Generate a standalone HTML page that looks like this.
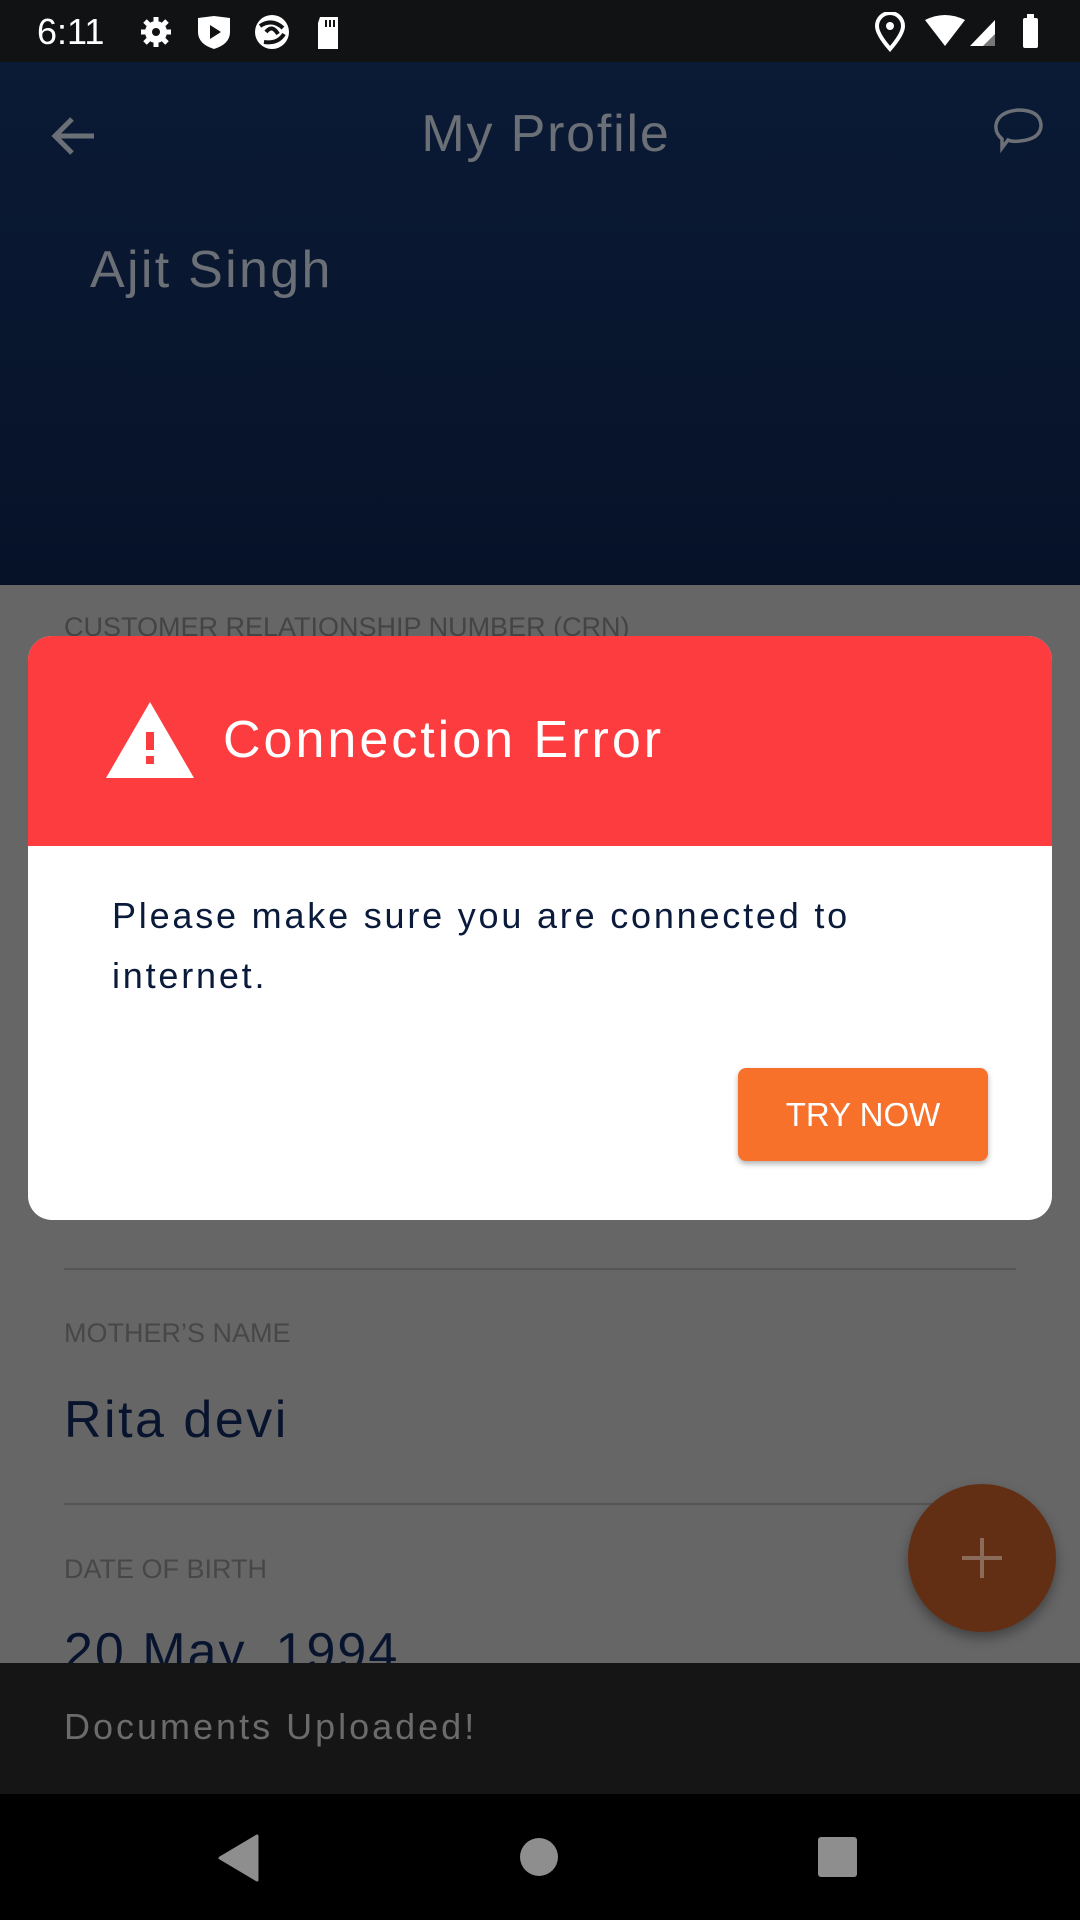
<!DOCTYPE html>
<html><head><meta charset="utf-8"><style>
*{margin:0;padding:0;box-sizing:border-box}
body{width:1080px;height:1920px;position:relative;overflow:hidden;background:#666;font-family:"Liberation Sans",sans-serif}
.a{position:absolute;white-space:nowrap}
</style></head><body>
<div class="a" style="left:0;top:0;width:1080px;height:62px;background:#111214"></div>
<div class="a" style="left:37px;top:11px;font-size:36px;color:#fff">6:11</div>
<svg class="a" style="left:138px;top:14px" width="210" height="36" viewBox="0 0 210 36">
<circle cx="18" cy="18" r="11" fill="#fff"/><circle cx="18" cy="18" r="4" fill="#111214"/>
<g stroke="#fff" stroke-width="5"><line x1="18" y1="3" x2="18" y2="33"/><line x1="3" y1="18" x2="33" y2="18"/><line x1="7" y1="7" x2="29" y2="29"/><line x1="29" y1="7" x2="7" y2="29"/></g>
<circle cx="18" cy="18" r="4" fill="#111214"/>
<path d="M60 4 L76 2 L92 4 L92 18 Q92 30 76 35 Q60 30 60 18Z" fill="#fff"/><path d="M72 11 L83 18 L72 25Z" fill="#111214"/>
<circle cx="134" cy="18" r="17" fill="#fff"/><path d="M122 12 Q134 4 145 14 M126 28 Q140 30 146 20 M128 18 Q134 10 140 20" stroke="#111214" stroke-width="4" fill="none"/>
<path d="M182 3 L200 3 L200 35 L180 35 L180 9Z" fill="#fff"/><g stroke="#111214" stroke-width="2"><line x1="188" y1="6" x2="188" y2="13"/><line x1="192" y1="6" x2="192" y2="13"/><line x1="196" y1="6" x2="196" y2="13"/></g>
</svg>
<svg class="a" style="left:875px;top:12px" width="170" height="40" viewBox="0 0 170 40">
<path d="M15 37 Q2 22 2 14 A13 13 0 0 1 28 14 Q28 22 15 37Z" fill="none" stroke="#fff" stroke-width="4"/><circle cx="15" cy="14" r="4" fill="#fff"/>
<path d="M50 8 Q70 -2 90 8 L70 34Z" fill="#fff"/>
<path d="M95 34 L120 8 L120 34Z" fill="#fff"/><path d="M108 34 L120 22 L120 34" fill="#777"/>
<rect x="148" y="6" width="15" height="30" rx="2" fill="#fff"/><rect x="152" y="2" width="7" height="5" fill="#fff"/>
</svg>
<div class="a" style="left:0;top:62px;width:1080px;height:523px;background:linear-gradient(#0b1a35,#061228)"></div>
<svg class="a" style="left:50px;top:114px" width="48" height="44" viewBox="0 0 48 44"><path d="M44 22 H6 M22 5 L5 22 L22 39" stroke="#6b6f76" stroke-width="5" fill="none"/></svg>
<div class="a" style="left:0;width:1092px;top:104px;text-align:center;font-size:52px;color:#6b6f76;letter-spacing:1.8px">My Profile</div>
<svg class="a" style="left:992px;top:106px" width="54" height="52" viewBox="0 0 54 52"><path d="M10 42 L10 33 Q3 27 4 19 Q6 6 26 4 Q48 4 49 19 Q49 33 28 35 Q20 36 16 34 Z" fill="none" stroke="#6b6f76" stroke-width="3.5"/></svg>
<div class="a" style="left:90px;top:240px;font-size:52px;color:#6b6f76;letter-spacing:2.3px">Ajit Singh</div>

<div class="a" style="left:64px;top:612px;font-size:27px;color:#444">CUSTOMER RELATIONSHIP NUMBER (CRN)</div>
<div class="a" style="left:64px;top:1268px;width:952px;height:2px;background:#555"></div>
<div class="a" style="left:64px;top:1318px;font-size:27px;color:#474747">MOTHER’S NAME</div>
<div class="a" style="left:64px;top:1390px;font-size:52px;color:#08142e;letter-spacing:2.5px">Rita devi</div>
<div class="a" style="left:64px;top:1503px;width:952px;height:2px;background:#555"></div>
<div class="a" style="left:64px;top:1554px;font-size:27px;color:#474747">DATE OF BIRTH</div>
<div class="a" style="left:64px;top:1622px;font-size:52px;color:#08142e;letter-spacing:2px">20 May, 1994</div>
<div class="a" style="left:908px;top:1484px;width:148px;height:148px;border-radius:50%;background:#632f14;box-shadow:0 6px 12px rgba(0,0,0,.35)"></div>
<div class="a" style="left:962px;top:1538px;width:40px;height:40px"><div class="a" style="left:18px;top:0;width:4px;height:40px;background:#8a6a58"></div><div class="a" style="left:0;top:18px;width:40px;height:4px;background:#8a6a58"></div></div>

<div class="a" style="left:0;top:1663px;width:1080px;height:131px;background:#151515"></div>
<div class="a" style="left:64px;top:1706px;font-size:36px;color:#6b6b6b;letter-spacing:3px">Documents Uploaded!</div>
<div class="a" style="left:0;top:1794px;width:1080px;height:126px;background:#000"></div>
<svg class="a" style="left:0;top:1820px" width="1080" height="80"><path d="M257 16 L257 60 L220 38Z" fill="#8e8e8e" stroke="#8e8e8e" stroke-width="3" stroke-linejoin="round"/><circle cx="539" cy="37" r="19" fill="#8e8e8e"/><rect x="818" y="17" width="39" height="40" rx="3" fill="#8e8e8e"/></svg>

<div class="a" style="left:28px;top:636px;width:1024px;height:584px;border-radius:24px;background:#fff;overflow:hidden">
<div class="a" style="left:0;top:0;width:1024px;height:210px;background:#fc3c3e"></div>
<svg class="a" style="left:78px;top:66px" width="88" height="76" viewBox="0 0 88 76"><path d="M44 0 L88 76 L0 76Z" fill="#fff"/><rect x="40" y="30" width="8" height="18" fill="#fc3c3e"/><rect x="40" y="54" width="8" height="8" fill="#fc3c3e"/></svg>
<div class="a" style="left:195px;top:74px;font-size:52px;color:#fff;letter-spacing:3px">Connection Error</div>
<div class="a" style="left:84px;top:250px;font-size:36px;line-height:60px;color:#0a1a3a;letter-spacing:2.8px">Please make sure you are connected to<br>internet.</div>
<div class="a" style="left:710px;top:432px;width:250px;height:93px;border-radius:8px;background:#f7712b;box-shadow:0 3px 6px rgba(0,0,0,.3);color:#fff;font-size:33px;text-align:center;line-height:93px">TRY NOW</div>
</div>
</body></html>
